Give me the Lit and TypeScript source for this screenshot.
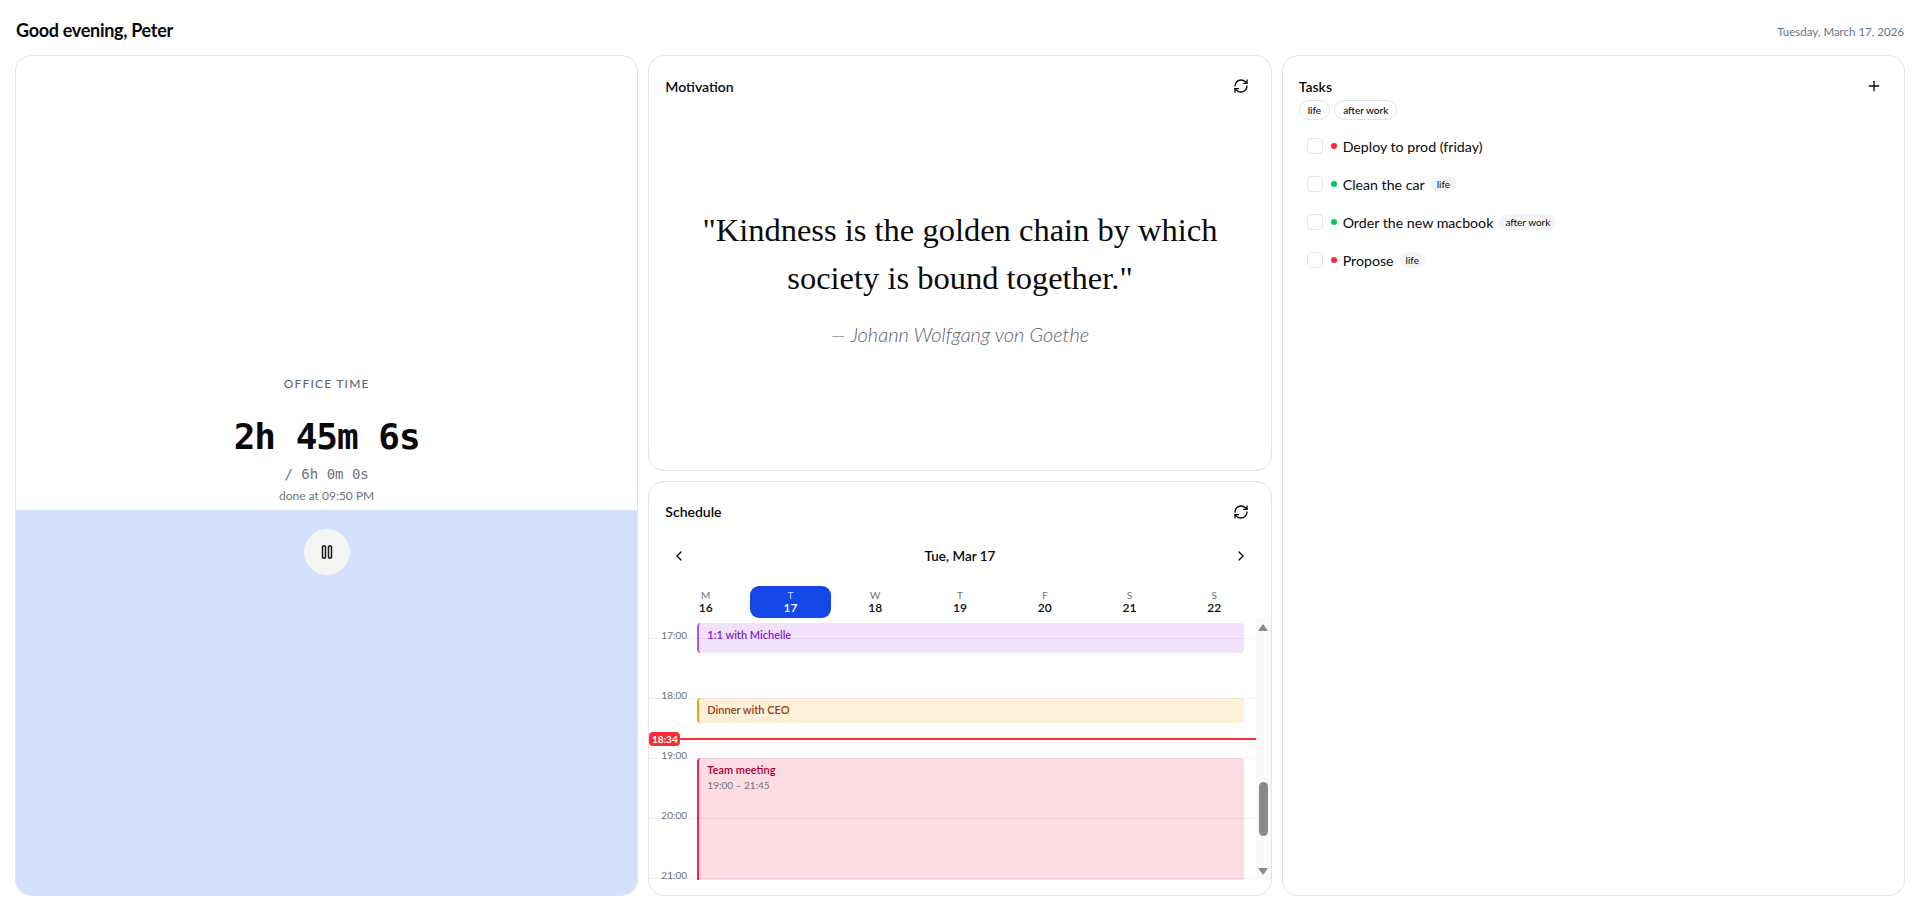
import { LitElement, html, css, svg } from 'lit';
import { customElement } from 'lit/decorators.js';

const refreshIcon = html`<svg class="icon head-icon" viewBox="0 0 24 24" width="16" height="16">
    <path d="M3 12a9 9 0 0 1 9-9 9.75 9.75 0 0 1 6.74 2.74L21 8" />
    <path d="M21 3v5h-5" />
    <path d="M21 12a9 9 0 0 1-9 9 9.75 9.75 0 0 1-6.74-2.74L3 16" />
    <path d="M8 16H3v5" />
</svg>`;

const chevron = (d: string) => html`<svg class="icon" viewBox="0 0 24 24" width="16" height="16">${svg`<path d=${d} />`}</svg>`;

const DAYS = [
    ['M', 16],
    ['T', 17],
    ['W', 18],
    ['T', 19],
    ['F', 20],
    ['S', 21],
    ['S', 22],
];

const TASKS = [
    { name: 'Deploy to prod (friday)', color: '#fb2c36', tag: '' },
    { name: 'Clean the car', color: '#00c950', tag: 'life' },
    { name: 'Order the new macbook', color: '#00c950', tag: 'after work' },
    { name: 'Propose', color: '#fb2c36', tag: 'life' },
];

const HOURS = [17, 18, 19, 20, 21];
const HOUR_PX = 60;
// top of the timeline canvas sits at 16:40
const START_MIN = 16 * 60 + 40;
const toY = (min: number) => ((min - START_MIN) / 60) * HOUR_PX;
// the red line is drawn a bit below its label's time in the reference
const NOW_Y = toY(18 * 60 + 41);

@customElement('app-root')
export class AppRoot extends LitElement {
    static styles = css`
        :host {
            display: block;
            height: 911px;
            background: #fff;
            color: #09090b;
            font-family: 'Lato', 'Noto Sans', sans-serif;
            overflow: hidden;
        }
        * {
            box-sizing: border-box;
        }
        .page {
            display: flex;
            flex-direction: column;
            height: 100%;
            padding: 0 15px 15px;
        }
        .top {
            display: flex;
            justify-content: space-between;
            align-items: center;
            height: 55px;
            padding: 4px 1px 0;
        }
        .greeting {
            font-size: 18px;
            font-weight: 700;
            letter-spacing: -0.3px;
        }
        .today {
            font-size: 11.5px;
            color: #64748b;
            padding-top: 4px;
        }
        .columns {
            flex: 1;
            min-height: 0;
            display: grid;
            grid-template-columns: repeat(3, 1fr);
            gap: 10px;
        }
        .card {
            border: 1px solid #e4e4e7;
            border-radius: 16px;
            background: #fff;
            min-height: 0;
            overflow: hidden;
        }
        .stack {
            display: grid;
            grid-template-rows: 1fr 1fr;
            gap: 10px;
            min-height: 0;
        }
        .icon {
            fill: none;
            stroke: currentColor;
            stroke-width: 2;
            stroke-linecap: round;
            stroke-linejoin: round;
            display: block;
        }
        .head-icon {
            margin-right: 6px;
        }
        .card-head {
            display: flex;
            justify-content: space-between;
            align-items: center;
            height: 20px;
            font-size: 14px;
            font-weight: 600;
        }

        /* timer */
        .timer {
            position: relative;
            display: flex;
            flex-direction: column;
            align-items: center;
            justify-content: center;
        }
        .fill {
            position: absolute;
            left: 0;
            right: 0;
            bottom: 0;
            background: #d4e1fd;
        }
        .timer > div:not(.fill) {
            position: relative;
        }
        .label {
            font-size: 12px;
            line-height: 16px;
            font-weight: 500;
            letter-spacing: 1.2px;
            color: #5f6775;
        }
        .clock {
            font-family: 'DejaVu Sans Mono', 'Liberation Mono', monospace;
            font-size: 36px;
            line-height: 40px;
            font-weight: 700;
            letter-spacing: -1px;
            margin-top: 25px;
        }
        .goal {
            font-family: 'DejaVu Sans Mono', 'Liberation Mono', monospace;
            font-size: 14px;
            line-height: 20px;
            color: #71717a;
            margin-top: 7px;
        }
        .done {
            font-size: 12px;
            line-height: 16px;
            color: #71717a;
            margin-top: 4px;
        }
        .pause {
            width: 46px;
            height: 46px;
            border-radius: 50%;
            background: #f4f4f5;
            display: flex;
            align-items: center;
            justify-content: center;
            margin-top: 25px;
            color: #18181b;
        }

        /* motivation */
        .motivation {
            display: flex;
            flex-direction: column;
            padding: 20px 16px 0;
        }
        .quote-wrap {
            flex: 1;
            display: flex;
            flex-direction: column;
            align-items: center;
            justify-content: center;
            text-align: center;
            padding-bottom: 12px;
        }
        .quote {
            font-family: 'Liberation Serif', serif;
            font-size: 32.5px;
            line-height: 48px;
            width: 540px;
        }
        .author {
            font-size: 20px;
            font-style: italic;
            font-weight: 300;
            line-height: 28px;
            color: #5f5f68;
            margin-top: 18px;
        }

        /* schedule */
        .schedule {
            display: flex;
            flex-direction: column;
        }
        .schedule .card-head {
            margin: 20px 16px 0;
        }
        .nav {
            display: flex;
            justify-content: space-between;
            align-items: center;
            height: 20px;
            margin: 24px 22px 0;
            font-size: 13.5px;
            font-weight: 600;
        }
        .week {
            display: grid;
            grid-template-columns: repeat(7, 1fr);
            gap: 4px;
            margin: 20px 16px 0;
        }
        .day {
            height: 32px;
            border-radius: 9px;
            display: flex;
            flex-direction: column;
            align-items: center;
            justify-content: center;
            font-size: 12px;
            line-height: 14px;
            font-weight: 600;
        }
        .day span {
            font-size: 10px;
            line-height: 12px;
            font-weight: 400;
            color: #71717a;
        }
        .day.on {
            background: #1447e6;
            color: #fff;
        }
        .day.on span {
            color: #bfd2ff;
        }
        .body {
            height: 262px;
            display: flex;
            flex: none;
        }
        .canvas {
            position: relative;
            flex: 1;
            overflow: hidden;
        }
        .hour-line {
            position: absolute;
            left: 0;
            right: 0;
            height: 1px;
            background: rgba(0, 0, 0, 0.06);
            z-index: 2;
        }
        .hour {
            position: absolute;
            left: 12px;
            font-size: 10px;
            line-height: 8px;
            color: #71717a;
        }
        .event {
            position: absolute;
            left: 48px;
            right: 12px;
            border-left: 2px solid;
            border-radius: 4px;
            padding: 4px 8px;
            font-size: 11px;
            line-height: 16px;
            font-weight: 600;
        }
        .event small {
            display: block;
            font-size: 10px;
            line-height: 14px;
            font-weight: 400;
            color: #71717a;
        }
        .event.purple {
            background: #f3e2fe;
            border-color: #a855f7;
            color: #7e22ce;
        }
        .event.orange {
            background: #fef0d9;
            border-color: #f59e0b;
            color: #92400e;
        }
        .event.rose {
            background: #fedce4;
            border-color: #ff2056;
            color: #a50036;
        }
        .now-line {
            position: absolute;
            left: 0;
            right: 0;
            height: 2px;
            background: #fb2c36;
            z-index: 3;
        }
        .now {
            position: absolute;
            left: 0;
            width: 31px;
            height: 14px;
            border-radius: 4px;
            background: #fb2c36;
            color: #fff;
            font-size: 10px;
            line-height: 14px;
            font-weight: 700;
            text-align: center;
            z-index: 4;
        }
        .scrollbar {
            position: relative;
            width: 15px;
            background: #fafafa;
        }
        .arrow {
            position: absolute;
            left: 2.5px;
            width: 0;
            height: 0;
            border-left: 5px solid transparent;
            border-right: 5px solid transparent;
        }
        .arrow.up {
            top: 6px;
            border-bottom: 7px solid #8a8a8a;
        }
        .arrow.down {
            bottom: 5px;
            border-top: 7px solid #8a8a8a;
        }
        .thumb {
            position: absolute;
            left: 3px;
            top: 164px;
            width: 9px;
            height: 54px;
            border-radius: 5px;
            background: #8a8a8a;
        }

        /* tasks */
        .tasks {
            padding: 20px 16px;
        }
        .filters {
            display: flex;
            gap: 4px;
            margin-top: 4px;
        }
        .filter {
            height: 20px;
            padding: 0 8px;
            border: 1px solid #e4e4e7;
            border-radius: 10px;
            font-size: 10px;
            line-height: 18px;
            font-weight: 500;
        }
        .task-list {
            margin-top: 18px;
            padding-left: 8px;
            display: flex;
            flex-direction: column;
            gap: 22px;
        }
        .task {
            display: flex;
            align-items: center;
            height: 16px;
            font-size: 14.2px;
        }
        .check {
            width: 16px;
            height: 16px;
            border: 1px solid #e4e4e7;
            border-radius: 4px;
        }
        .dot {
            width: 6px;
            height: 6px;
            border-radius: 50%;
            margin: 0 6px 0 8px;
        }
        .tag {
            height: 16px;
            padding: 0 6px;
            margin-left: 6px;
            border-radius: 8px;
            background: #f4f4f5;
            font-size: 10px;
            line-height: 16px;
        }
    `;

    renderTimer() {
        const fill = (2 * 3600 + 45 * 60 + 6) / (6 * 3600);
        return html`
            <section class="card timer">
                <div class="fill" style="height: ${fill * 100}%"></div>
                <div class="label">OFFICE TIME</div>
                <div class="clock">2h 45m 6s</div>
                <div class="goal">/ 6h 0m 0s</div>
                <div class="done">done at 09:50 PM</div>
                <div class="pause">
                    <svg class="icon" viewBox="0 0 24 24" width="18" height="18">
                        <rect x="14" y="4" width="4" height="16" rx="1" />
                        <rect x="6" y="4" width="4" height="16" rx="1" />
                    </svg>
                </div>
            </section>
        `;
    }

    renderMotivation() {
        return html`
            <section class="card motivation">
                <div class="card-head"><span>Motivation</span>${refreshIcon}</div>
                <div class="quote-wrap">
                    <div class="quote">"Kindness is the golden chain by which society is bound together."</div>
                    <div class="author">— Johann Wolfgang von Goethe</div>
                </div>
            </section>
        `;
    }

    renderSchedule() {
        return html`
            <section class="card schedule">
                <div class="card-head"><span>Schedule</span>${refreshIcon}</div>
                <div class="nav">
                    ${chevron('m15 18-6-6 6-6')}
                    <span>Tue, Mar 17</span>
                    ${chevron('m9 18 6-6-6-6')}
                </div>
                <div class="week">
                    ${DAYS.map(
                        ([letter, date]) => html`
                            <div class="day ${date === 17 ? 'on' : ''}"><span>${letter}</span>${date}</div>
                        `,
                    )}
                </div>
                <div class="body">
                    <div class="canvas">
                        <div class="event purple" style="top: ${toY(16 * 60 + 45)}px; height: 30px">1:1 with Michelle</div>
                        <div class="event orange" style="top: ${toY(18 * 60)}px; height: 25px">Dinner with CEO</div>
                        <div class="event rose" style="top: ${toY(19 * 60)}px; height: 165px">
                            Team meeting
                            <small>19:00 – 21:45</small>
                        </div>
                        ${HOURS.map(
                            (h) => html`
                                <div class="hour-line" style="top: ${toY(h * 60)}px"></div>
                                <div class="hour" style="top: ${toY(h * 60) - 7}px">${h}:00</div>
                            `,
                        )}
                        <div class="now-line" style="top: ${NOW_Y - 1}px"></div>
                        <div class="now" style="top: ${NOW_Y - 7}px">18:34</div>
                    </div>
                    <div class="scrollbar">
                        <div class="arrow up"></div>
                        <div class="thumb"></div>
                        <div class="arrow down"></div>
                    </div>
                </div>
            </section>
        `;
    }

    renderTasks() {
        return html`
            <section class="card tasks">
                <div class="card-head">
                    <span>Tasks</span>
                    <svg class="icon head-icon" viewBox="0 0 24 24" width="16" height="16">
                        <path d="M5 12h14" />
                        <path d="M12 5v14" />
                    </svg>
                </div>
                <div class="filters">
                    <div class="filter">life</div>
                    <div class="filter">after work</div>
                </div>
                <div class="task-list">
                    ${TASKS.map(
                        (t) => html`
                            <div class="task">
                                <div class="check"></div>
                                <div class="dot" style="background: ${t.color}"></div>
                                <span>${t.name}</span>
                                ${t.tag ? html`<span class="tag">${t.tag}</span>` : ''}
                            </div>
                        `,
                    )}
                </div>
            </section>
        `;
    }

    render() {
        return html`
            <div class="page">
                <header class="top">
                    <div class="greeting">Good evening, Peter</div>
                    <div class="today">Tuesday, March 17, 2026</div>
                </header>
                <div class="columns">
                    ${this.renderTimer()}
                    <div class="stack">${this.renderMotivation()} ${this.renderSchedule()}</div>
                    ${this.renderTasks()}
                </div>
            </div>
        `;
    }
}
